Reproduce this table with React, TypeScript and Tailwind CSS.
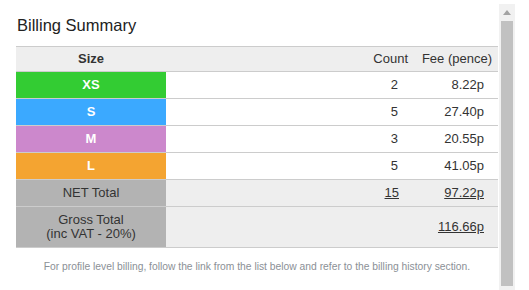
import React from 'react';

const rows = [
  { size: 'XS', color: 'bg-[#33cc33]', count: '2', fee: '8.22p' },
  { size: 'S', color: 'bg-[#3ba9ff]', count: '5', fee: '27.40p' },
  { size: 'M', color: 'bg-[#cc88cc]', count: '3', fee: '20.55p' },
  { size: 'L', color: 'bg-[#f4a431]', count: '5', fee: '41.05p' },
];

const grid = 'grid grid-cols-[150px_1fr_78px_82px] border-b border-[#cccccc]';

const App = () => {
  return (
    <div className="w-[529px] h-[290px] bg-white flex font-['Liberation_Sans',Arial,sans-serif] text-[#333333] overflow-hidden">
      <div className="w-[499px] pl-4 pr-[1px]">
        {/* Title */}
        <h1 className="pt-4 text-[16.5px] leading-[18px] text-[#222222] pl-[1px]">Billing Summary</h1>

        {/* Table */}
        <div className="mt-3 border-t border-[#cccccc] text-[13px]">
          <div className={`${grid} bg-[#eeeeee] h-[25px] items-center`}>
            <div className="text-center font-bold">Size</div>
            <div />
            <div className="text-right pr-2">Count</div>
            <div className="text-right pr-[6px]">Fee (pence)</div>
          </div>
          {rows.map((r) => (
            <div key={r.size} className={`${grid} h-[27px]`}>
              <div className={`${r.color} flex items-center justify-center font-bold text-white`}>{r.size}</div>
              <div />
              <div className="flex items-center justify-end pr-[18px]">{r.count}</div>
              <div className="flex items-center justify-end pr-[14px]">{r.fee}</div>
            </div>
          ))}
          <div className={`${grid} h-[27px] bg-[#eeeeee]`}>
            <div className="bg-[#b3b3b3] flex items-center justify-center">NET Total</div>
            <div />
            <div className="flex items-center justify-end pr-[17px]"><span className="underline">15</span></div>
            <div className="flex items-center justify-end pr-[14px]"><span className="underline">97.22p</span></div>
          </div>
          <div className={`${grid} h-[41px] bg-[#eeeeee]`}>
            <div className="bg-[#b3b3b3] flex flex-col items-center justify-center leading-[14px]">
              <span>Gross Total</span>
              <span>(inc VAT - 20%)</span>
            </div>
            <div />
            <div />
            <div className="flex items-center justify-end pr-[14px]"><span className="underline">116.66p</span></div>
          </div>
        </div>

        {/* Footer note */}
        <p className="mt-[11px] text-center text-[10.3px] text-[#8b9096]">
          For profile level billing, follow the link from the list below and refer to the billing history section.
        </p>
      </div>

      {/* Scrollbar */}
      <div className="mt-1 w-4 h-[286px] bg-[#f1f1f1] flex flex-col items-center">
        <div className="h-[17px] flex items-center justify-center">
          <svg width="8" height="5" viewBox="0 0 8 5">
            <polygon points="4,0 8,5 0,5" fill="#a3a3a3" />
          </svg>
        </div>
        <div className="w-3 h-[265px] bg-[#c1c1c1]" />
      </div>
    </div>
  );
};

export default App;
